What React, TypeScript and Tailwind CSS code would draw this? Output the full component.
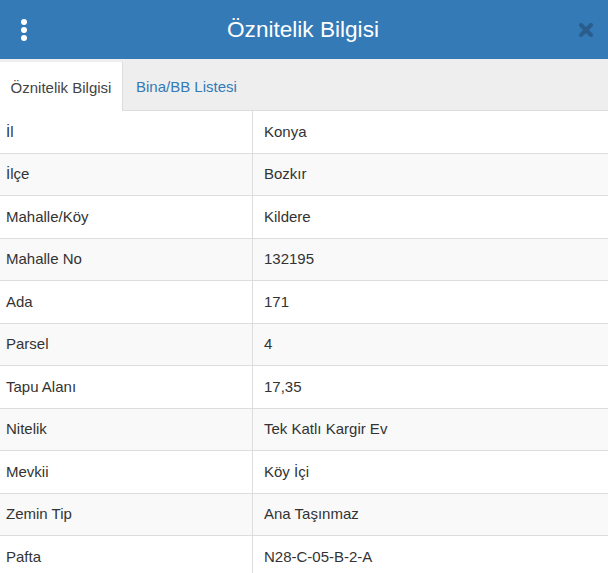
const rows: [string, string][] = [
  ["İl", "Konya"],
  ["İlçe", "Bozkır"],
  ["Mahalle/Köy", "Kildere"],
  ["Mahalle No", "132195"],
  ["Ada", "171"],
  ["Parsel", "4"],
  ["Tapu Alanı", "17,35"],
  ["Nitelik", "Tek Katlı Kargir Ev"],
  ["Mevkii", "Köy İçi"],
  ["Zemin Tip", "Ana Taşınmaz"],
  ["Pafta", "N28-C-05-B-2-A"],
];

export default function App() {
  return (
    <div className="h-[573px] w-[608px] overflow-hidden bg-white text-[#333] font-['Liberation_Sans',Arial,sans-serif]">
      {/* header */}
      <div className="flex h-[59px] items-center bg-[#337ab7] px-[21px]">
        <div className="flex w-[6px] flex-col gap-[2px]">
          <span className="h-[6px] w-[6px] rounded-full bg-white" />
          <span className="h-[6px] w-[6px] rounded-full bg-white" />
          <span className="h-[6px] w-[6px] rounded-full bg-white" />
        </div>
        <h1 className="flex-1 text-center text-[22.6px] text-white">Öznitelik Bilgisi</h1>
        <svg width="14" height="14" viewBox="0 0 14 14" className="mr-[-6px]">
          <path d="M2 2 L12 12 M12 2 L2 12" stroke="#2a5d8c" strokeWidth="4" strokeLinecap="round" />
        </svg>
      </div>

      {/* tabs */}
      <div className="flex h-[52px] items-end border-b border-[#ddd] bg-[#eee]">
        <div className="mb-[-1px] flex h-[49px] w-[123px] items-center justify-center border-r border-[#ddd] bg-white pt-[3px] text-[15px] text-[#444]">
          Öznitelik Bilgisi
        </div>
        <div className="flex h-[48px] items-center px-[13px] pt-[3px] text-[15px] text-[#337ab7]">Bina/BB Listesi</div>
      </div>

      {/* table */}
      <div>
        {rows.map(([k, v], i) => (
          <div
            key={k}
            className={`grid h-[42.5px] grid-cols-[253px_1fr] border-b border-[#ddd] text-[15px] ${i % 2 === 1 ? "bg-[#f9f9f9]" : "bg-white"}`}
          >
            <div className="flex items-center border-r border-[#ddd] pl-[6px]">{k}</div>
            <div className="flex items-center pl-[11px]">{v}</div>
          </div>
        ))}
      </div>
    </div>
  );
}
